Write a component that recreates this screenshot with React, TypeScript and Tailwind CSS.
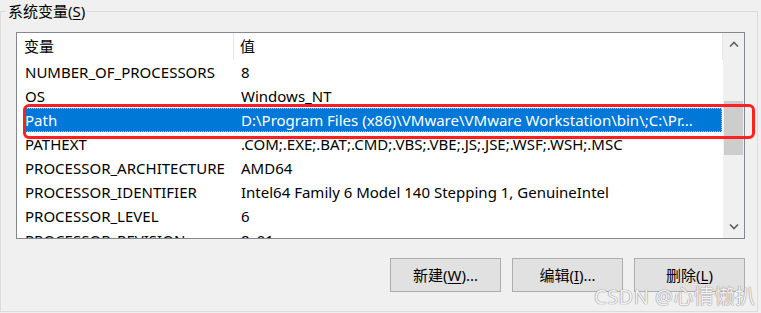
import React from "react"

const font = { fontFamily: '"Noto Sans", "Noto Sans CJK SC", sans-serif' }

const rows: { name: string; value: string; selected?: boolean }[] = [
  { name: "NUMBER_OF_PROCESSORS", value: "8" },
  { name: "OS", value: "Windows_NT" },
  { name: "Path", value: "D:\\Program Files (x86)\\VMware\\VMware Workstation\\bin\\;C:\\Pr...", selected: true },
  { name: "PATHEXT", value: ".COM;.EXE;.BAT;.CMD;.VBS;.VBE;.JS;.JSE;.WSF;.WSH;.MSC" },
  { name: "PROCESSOR_ARCHITECTURE", value: "AMD64" },
  { name: "PROCESSOR_IDENTIFIER", value: "Intel64 Family 6 Model 140 Stepping 1, GenuineIntel" },
  { name: "PROCESSOR_LEVEL", value: "6" },
  { name: "PROCESSOR_REVISION", value: "8c01" },
]

function Btn({ label, hot, rest }: { label: string; hot: string; rest: string }) {
  return (
    <button className="w-[111px] h-[34px] bg-[#e1e1e1] border border-[#adadad] text-[15px] text-black flex items-center justify-center">
      {label}(<span className="underline underline-offset-2">{hot}</span>){rest}
    </button>
  )
}

export default function App() {
  return (
    <div className="relative w-[761px] h-[313px] bg-[#f0f0f0] overflow-hidden text-black" style={font}>
      {/* group box */}
      <div className="mt-[11px] h-[301px] w-[758px] border-t border-l border-b border-r border-[#dcdcdc] pl-[15px] pt-[20px]">
        {/* list view */}
        <div className="w-[729px] h-[207px] border border-[#828790] bg-white flex overflow-hidden">
          <div className="w-[706px] flex flex-col overflow-hidden">
            <div className="h-[27px] shrink-0 flex items-center text-[15px]">
              <div className="ml-[7px] w-[210px] h-full flex items-center border-r border-[#e5e5e5]">变量</div>
              <div className="pl-[6px] flex-1 h-full flex items-center border-r border-[#e5e5e5]">值</div>
            </div>
            {rows.map((r) => (
              <div
                key={r.name}
                className={
                  r.selected
                    ? "ml-[7px] w-[698px] h-[24px] shrink-0 flex items-center text-[15px] whitespace-nowrap bg-[#0078d7] text-white outline-1 outline-dotted outline-[#f3b45c] -outline-offset-1"
                    : "ml-[7px] w-[698px] h-[24px] shrink-0 flex items-center text-[15px] whitespace-nowrap"
                }
              >
                <div className="w-[217px] pl-[1px]">{r.name}</div>
                <div className="flex-1">{r.value}</div>
              </div>
            ))}
          </div>
          {/* scrollbar */}
          <div className="w-[21px] h-full bg-[#f0f0f0] flex flex-col items-center">
            <div className="h-[22px] w-full flex items-center justify-center">
              <svg width="10" height="6" viewBox="0 0 10 6"><path d="M1 5.5 L5 1.5 L9 5.5" fill="none" stroke="#606060" strokeWidth="1.6" /></svg>
            </div>
            <div className="mt-[46px] w-[19px] h-[54px] bg-[#cdcdcd]" />
            <div className="flex-1" />
            <div className="h-[22px] w-full flex items-center justify-center">
              <svg width="10" height="6" viewBox="0 0 10 6"><path d="M1 0.5 L5 4.5 L9 0.5" fill="none" stroke="#606060" strokeWidth="1.6" /></svg>
            </div>
          </div>
        </div>
        {/* buttons */}
        <div className="w-[729px] mt-[19px] flex justify-end gap-[11px]">
          <Btn label="新建" hot="W" rest="..." />
          <Btn label="编辑" hot="I" rest="..." />
          <Btn label="删除" hot="L" rest="" />
        </div>
      </div>

      {/* group label */}
      <div className="absolute left-[6px] top-[1px] px-[2px] bg-[#f0f0f0] text-[15px] leading-[20px]">
        系统变量(<span className="underline underline-offset-2">S</span>)
      </div>

      {/* red annotation */}
      <div className="absolute left-[23px] top-[104px] w-[732px] h-[35px] border-[3px] border-[#ff2020] rounded-[6px]" />

      {/* watermark */}
      <div className="absolute left-[594px] top-[282px] text-[20px] tracking-[0.5px] text-[#f2f2f2] [text-shadow:0_0_1px_#8a8a8a,0_0_1px_#8a8a8a] whitespace-nowrap">
        CSDN @心情懒扒
      </div>
    </div>
  )
}
